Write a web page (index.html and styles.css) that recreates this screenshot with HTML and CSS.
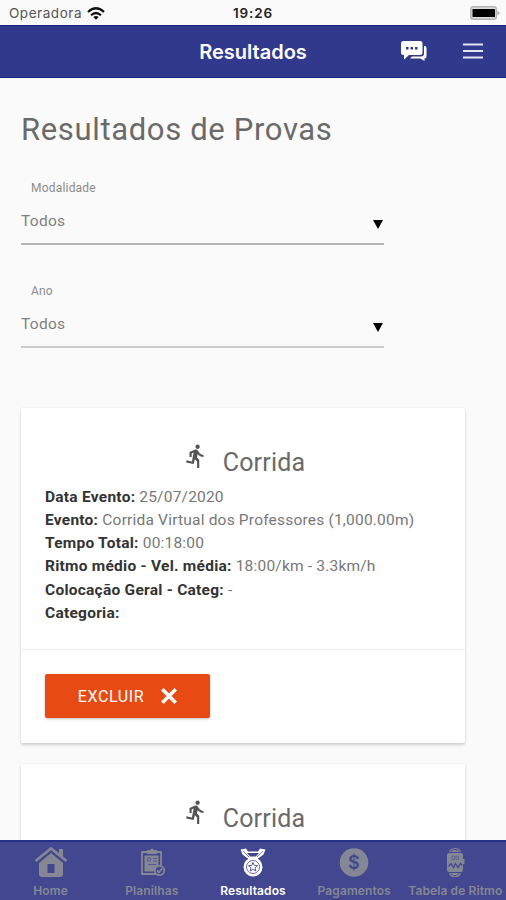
FILE: index.html
```html
<!DOCTYPE html>
<html lang="pt-BR">
<head>
<meta charset="utf-8">
<meta name="viewport" content="width=device-width, initial-scale=1">
<title>Resultados</title>
<link rel="stylesheet" href="styles.css">
</head>
<body>
<svg width="0" height="0" class="sprites" aria-hidden="true">
  <symbol id="runner" viewBox="0 0 24 24"><path d="M13.49 5.48c1.1 0 2-.9 2-2s-.9-2-2-2-2 .9-2 2 .9 2 2 2zm-3.6 13.9l1-4.4 2.1 2v6h2v-7.5l-2.1-2 .6-3c1.3 1.5 3.3 2.5 5.5 2.5v-2c-1.9 0-3.500-1-4.300-2.400l-1-1.600c-.4-.6-1-1-1.700-1-.3 0-.5.100-.8.100l-5.200 2.200v4.700h2v-3.400l1.800-.7-1.600 8.100-4.900-1-.4 2 7 1.400z"/></symbol>
</svg>
<div class="app">
  <div class="status">
    <div class="carrier"><span class="carrier-name">Operadora</span>
      <svg class="wifi" viewBox="0 0 18 13" fill="none" stroke="#111" stroke-width="2.2"><path d="M1 5Q9-2.500 17 5M4 8.300Q9 3.700 14 8.300"/><path d="M6.300 10Q9 7.800 11.700 10L9 12.800z" fill="#111" stroke="none"/></svg>
    </div>
    <span class="time">19:26</span>
    <svg class="battery" viewBox="0 0 30 14"><rect x=".8" y=".8" width="25.500" height="12.400" rx="2.500" fill="#ddd" stroke="#b5b5b5" stroke-width="1.500"/><rect x="2.500" y="3" width="22.500" height="8" rx=".5"/><path d="M27.500 4.500L30 7l-2.500 2.500z" fill="#aaa"/></svg>
  </div>
  <header class="header">
    <h1 class="title">Resultados</h1>
    <svg class="chat" viewBox="0 0 26 20" fill="#fff"><path d="M2.500 0h16.500a2.500 2.500 0 0 1 2.500 2.500v9a2.500 2.500 0 0 1-2.500 2.500H8l-5 4.500V14h-.5A2.500 2.500 0 0 1 0 11.500v-9A2.500 2.500 0 0 1 2.500 0z"/><path d="M23 5h.5A2 2 0 0 1 25.500 7v8.500a2 2 0 0 1-2 2V20l-4-2.500H9L11 15.500h9a3 3 0 0 0 3-3z"/><path d="M5 6h2.500v2.500H5zm4.500 0H12v2.500H9.500zM14 6h2.500v2.500H14z" fill="#31398c"/></svg>
    <svg class="menu" viewBox="0 0 20 16" stroke="#e4e5f2" stroke-width="2"><path d="M0 1.500h20M0 8h20M0 14.500h20"/></svg>
  </header>
  <main class="content">
    <h2 class="heading">Resultados de Provas</h2>
    <label class="field"><span class="field-label">Modalidade</span><span class="field-value">Todos</span><svg class="caret" viewBox="0 0 10 9"><path d="M0 0h10L5 9z"/></svg></label>
    <label class="field field-year"><span class="field-label">Ano</span><span class="field-value">Todos</span><svg class="caret" viewBox="0 0 10 9"><path d="M0 0h10L5 9z"/></svg></label>
    <article class="card">
      <div class="card-body">
        <div class="card-title"><svg class="runner"><use href="#runner"/></svg><span>Corrida</span></div>
        <div class="row"><b>Data Evento:</b> <span>25/07/2020</span></div>
        <div class="row"><b>Evento:</b> <span>Corrida Virtual dos Professores (1,000.00m)</span></div>
        <div class="row"><b>Tempo Total:</b> <span>00:18:00</span></div>
        <div class="row"><b>Ritmo médio - Vel. média:</b> <span>18:00/km - 3.3km/h</span></div>
        <div class="row"><b>Colocação Geral - Categ:</b> <span>-</span></div>
        <div class="row"><b>Categoria:</b></div>
      </div>
      <div class="card-action"><button class="delete">EXCLUIR<svg class="cross" viewBox="0 0 16 16" stroke="#fff" stroke-width="3.600"><path d="M1.300 1.300l13.400 13.400M14.700 1.300L1.300 14.700"/></svg></button></div>
    </article>
    <article class="card">
      <div class="card-body">
        <div class="card-title"><svg class="runner"><use href="#runner"/></svg><span>Corrida</span></div>
      </div>
    </article>
  </main>
  <nav class="tabs">
    <a class="tab"><svg class="icon" viewBox="0 0 34 32" fill="#858894"><path d="M5 16L17 6l12 10v11q0 3-3 3H8q-3 0-3-3zM25 2h4v9l-4-3z"/><path d="M1.500 14.500L17 1.500l15.500 13" fill="none" stroke="#42478f" stroke-width="5"/><path d="M1.500 14L17 1.500 32.500 14" fill="none" stroke="#858894" stroke-width="2.800"/><path d="M25 2h4v8l-4-3zM13.500 17h7v9h-7z"/><path d="M13.500 17h7v9h-7z" fill="#42478f"/></svg><span>Home</span></a>
    <a class="tab"><svg class="icon" viewBox="0 0 34 32" fill="none" stroke="#858894" stroke-width="1.800"><path d="M12 5H7v22h14M22 5h4v14"/><path d="M12 3h3q2-3 4 0h3v4H12z" fill="#858894" stroke="none"/><path d="M9.500 8.500h14v12l-4 4h-10z" fill="#858894" stroke="none"/><path d="M12.500 11h3v3h-3zM18 11.500h4M18 14h4M13 17.500h8" stroke="#555b92" stroke-width="1"/><circle cx="24.500" cy="23.500" r="4.700" fill="#42478f"/><path d="M22 23.500l2 2 3-4"/></svg><span>Planilhas</span></a>
    <a class="tab active"><svg class="icon" viewBox="0 0 34 32" fill="#fff"><path d="M4.500 2.500L10 1.500l2 3h10l2-3 5.500 1-2 5-6 4.500H12.500l-6-4.500z"/><path d="M11 6h12l-3 3.500h-6z" fill="#42478f"/><path d="M7 4l6 6M27 4l-6 6" stroke="#42478f" stroke-width=".7"/><circle cx="17" cy="20" r="9.500"/><circle cx="17" cy="20" r="6.500" fill="none" stroke="#42478f" stroke-width=".8"/><path d="M17 15.500l1.300 2.900 3.200.3-2.400 2.100.7 3.200-2.800-1.700-2.800 1.700.7-3.200-2.400-2.100 3.200-.3z" fill="none" stroke="#42478f" stroke-width=".9"/></svg><span>Resultados</span></a>
    <a class="tab"><svg class="icon" viewBox="0 0 34 32"><circle cx="17" cy="15.500" r="14.300" fill="#858894"/><text class="coin-mark" x="17" y="22">$</text></svg><span>Pagamentos</span></a>
    <a class="tab"><svg class="icon" viewBox="0 0 34 32" fill="#858894"><path d="M11.500 5q1-3.500 5.500-3.500T22.500 5M11.500 26q1 3.500 5.500 3.500t5.500-3.500" fill="none" stroke="#858894" stroke-width="1.200"/><path d="M13 5q0-2 4-2t4 2zM13 26q0 2 4 2t4-2zM11 6h12q2 0 2 2v4h1.500v5H25v6q0 2-2 2H11q-2 0-2-2V8q0-2 2-2z"/><path d="M10.500 19.500l2.500-3 2.500 4 2-4 2.500 4 2.500-4 1.500 2" fill="none" stroke="#42478f" stroke-width="1.300"/><path d="M14 9h2.500v3.500H14zM18 9h2.500v3.500H18z" fill="none" stroke="#606590"/></svg><span>Tabela de Ritmo</span></a>
  </nav>
</div>
</body>
</html>
```
FILE: styles.css
```css
* { box-sizing: border-box; }
body { margin: 0; background: #fafafa; font-family: Roboto, "Liberation Sans", sans-serif; color: #666; }
svg { display: block; flex: none; }
.sprites { position: absolute; }
.app { height: 900px; display: flex; flex-direction: column; overflow: hidden; }
.status { height: 25px; flex: none; display: grid; grid-template-columns: 1fr auto 1fr; align-items: center; padding: 1px 6px 0 9px; font-family: Inter, sans-serif; font-size: 13.500px; }
.carrier { display: flex; align-items: center; gap: 5px; color: #555; letter-spacing: .55px; }
.carrier-name { font-size: 13.500px; }
.wifi { width: 18px; height: 13px; }
.time { font-weight: 600; color: #222; letter-spacing: .9px; margin: 0 2px 0 -1px; }
.battery { width: 30px; height: 14px; justify-self: end; }
.header { height: 53px; flex: none; background: #31398c; border-top: 1px solid #17237c; border-bottom: 1px solid #17237c; display: grid; grid-template-columns: 1fr auto 1fr; align-items: center; position: relative; }
.title { grid-column: 2; margin: 0; font: 600 20px Inter, sans-serif; color: #fff; }
.chat { position: absolute; left: 401px; top: 15px; width: 26px; height: 20px; }
.menu { position: absolute; left: 463px; top: 17px; width: 20px; height: 16px; }
.content { flex: 1; min-height: 0; overflow: hidden; padding: 31px 41px 0 21px; }
.heading { margin: 0; font-weight: 400; font-size: 31px; line-height: 42px; letter-spacing: .65px; color: #6a6a6a; }
.field { display: grid; grid-template-columns: 1fr auto; width: 363px; height: 65px; margin-top: 29px; border-bottom: 2px solid #b4b4b4; grid-template-rows: 16px 1fr; }
.field-year { margin-top: 38px; border-color: #ccc; }
.field-label { grid-column: 1 / 3; font-size: 12px; line-height: 16px; padding-left: 10px; letter-spacing: .2px; color: #8c8c8c; }
.field-value { font-size: 15.500px; line-height: 20px; letter-spacing: .3px; color: #808080; padding-top: 15px; }
.caret { width: 10px; height: 9px; margin: 24px 1px 0 0; }
.card { height: 335px; margin-bottom: 21px; background: #fff; border-radius: 2px; box-shadow: 0 2px 3px rgba(0,0,0,.16), 0 0 2px rgba(0,0,0,.08); }
.field-year + .card { margin-top: 60px; }
.card-body { height: 242px; padding: 34px 24px 0; border-bottom: 1px solid #eee; }
.card-title { display: flex; justify-content: center; height: 43.500px; gap: 14px; font-size: 25px; line-height: 41px; letter-spacing: .2px; color: #6a6a6a; padding-left: 2px; }
.runner { width: 26px; height: 28px; fill: #555; }
.row { font-size: 15.500px; line-height: 23.300px; white-space: nowrap; letter-spacing: .2px; color: #777; }
.row b { font-weight: 700; color: #333; letter-spacing: .25px; }
.card-action { padding: 24px; }
.delete { width: 165px; height: 44px; border: 0; border-radius: 2px; background: #e84a14; color: #fff; font: 400 16px Roboto, sans-serif; letter-spacing: .6px; display: flex; align-items: center; justify-content: center; gap: 17px; box-shadow: 0 1px 3px rgba(0,0,0,.25); }
.cross { width: 16px; height: 16px; }
.tabs { height: 60px; flex: none; background: #42478f; border-top: 2px solid #26308a; display: grid; grid-template-columns: repeat(5, 101.200px); color: #858894; }
.tab { display: flex; flex-direction: column; align-items: center; padding-top: 5px; font: 600 12px/16px Inter, sans-serif; letter-spacing: .1px; white-space: nowrap; }
.tab span { margin-top: 4px; }
.active { color: #fff; }
.icon { width: 34px; height: 32px; }
.coin-mark { font: 600 18px Inter, sans-serif; text-anchor: middle; fill: #42478f; }
```
